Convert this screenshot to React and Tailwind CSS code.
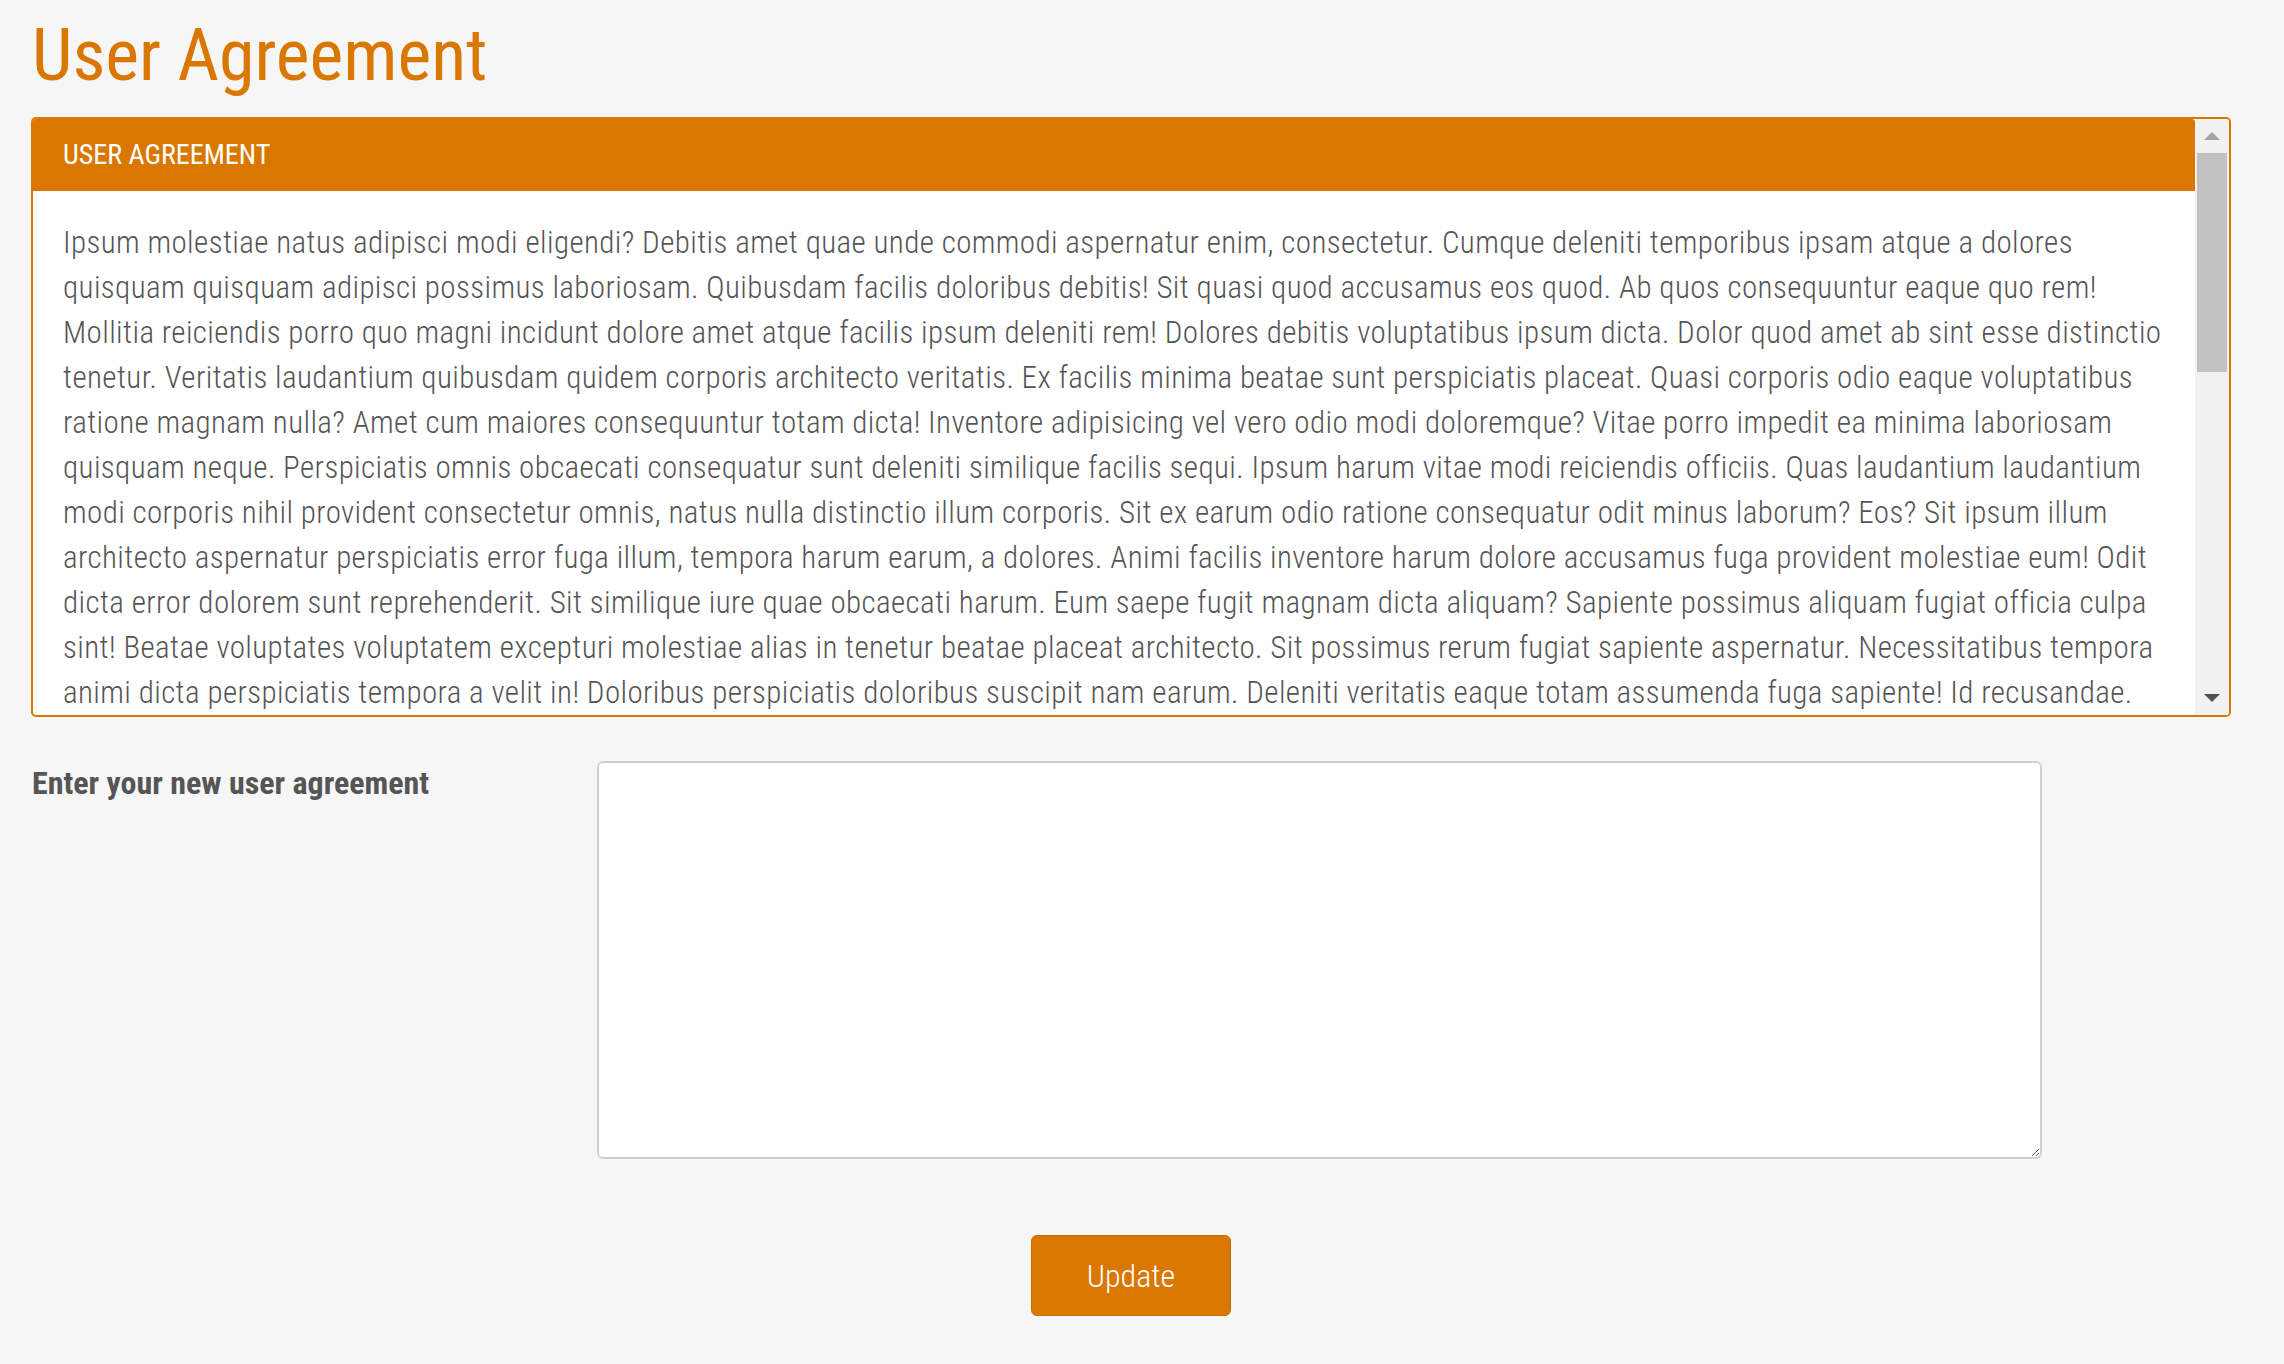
import React from "react";

const lines = [
  "Ipsum molestiae natus adipisci modi eligendi? Debitis amet quae unde commodi aspernatur enim, consectetur. Cumque deleniti temporibus ipsam atque a dolores",
  "quisquam quisquam adipisci possimus laboriosam. Quibusdam facilis doloribus debitis! Sit quasi quod accusamus eos quod. Ab quos consequuntur eaque quo rem!",
  "Mollitia reiciendis porro quo magni incidunt dolore amet atque facilis ipsum deleniti rem! Dolores debitis voluptatibus ipsum dicta. Dolor quod amet ab sint esse distinctio",
  "tenetur. Veritatis laudantium quibusdam quidem corporis architecto veritatis. Ex facilis minima beatae sunt perspiciatis placeat. Quasi corporis odio eaque voluptatibus",
  "ratione magnam nulla? Amet cum maiores consequuntur totam dicta! Inventore adipisicing vel vero odio modi doloremque? Vitae porro impedit ea minima laboriosam",
  "quisquam neque. Perspiciatis omnis obcaecati consequatur sunt deleniti similique facilis sequi. Ipsum harum vitae modi reiciendis officiis. Quas laudantium laudantium",
  "modi corporis nihil provident consectetur omnis, natus nulla distinctio illum corporis. Sit ex earum odio ratione consequatur odit minus laborum? Eos? Sit ipsum illum",
  "architecto aspernatur perspiciatis error fuga illum, tempora harum earum, a dolores. Animi facilis inventore harum dolore accusamus fuga provident molestiae eum! Odit",
  "dicta error dolorem sunt reprehenderit. Sit similique iure quae obcaecati harum. Eum saepe fugit magnam dicta aliquam? Sapiente possimus aliquam fugiat officia culpa",
  "sint! Beatae voluptates voluptatem excepturi molestiae alias in tenetur beatae placeat architecto. Sit possimus rerum fugiat sapiente aspernatur. Necessitatibus tempora",
  "animi dicta perspiciatis tempora a velit in! Doloribus perspiciatis doloribus suscipit nam earum. Deleniti veritatis eaque totam assumenda fuga sapiente! Id recusandae.",
];

export default function App() {
  return (
    <div className="min-h-screen bg-[#f6f6f6] font-['Roboto_Condensed','Roboto',sans-serif] [font-stretch:condensed]">
      <div className="pl-[31px] pr-[53px] pt-[16px] pb-[40px]">
        <h1 className="pl-px mb-[21px] text-[72px] leading-[80px] font-normal text-[#d97700]">
          User Agreement
        </h1>

        <div className="flex h-[600px] overflow-hidden rounded-[5px] border-2 border-[#d97700] bg-white">
          <div className="min-w-0 flex-1 overflow-hidden">
            <div className="flex h-[72px] items-center rounded-tr-[3px] bg-[#d97700] px-[30px] text-[28px] font-normal uppercase text-white">
              User Agreement
            </div>
            <div className="px-[30px] pt-[29px] text-[31px] leading-[45px] tracking-[0.4px] font-light text-[#555555]">
              {lines.map((l, i) => (
                <p key={i} className="whitespace-nowrap">
                  {l}
                </p>
              ))}
            </div>
          </div>
          <div className="flex w-[34px] flex-col bg-[#f1f1f1]">
            <div className="flex h-[34px] items-center justify-center">
              <svg width="16" height="8" viewBox="0 0 16 8">
                <polygon points="0,8 16,8 8,0" fill="#a3a3a3" />
              </svg>
            </div>
            <div className="mx-[2px] h-[219px] bg-[#c1c1c1]" />
            <div className="flex-1" />
            <div className="flex h-[34px] items-center justify-center">
              <svg width="16" height="8" viewBox="0 0 16 8">
                <polygon points="0,0 16,0 8,8" fill="#505050" />
              </svg>
            </div>
          </div>
        </div>

        <div className="mt-[44px] flex items-start">
          <label className="w-[566px] pl-px text-[32px] leading-[45px] font-bold text-[#555555]">
            Enter your new user agreement
          </label>
          <textarea className="h-[398px] w-[1445px] rounded-[6px] border-2 border-[#d0d0d0] bg-white outline-none" />
        </div>

        <div className="mt-[76px] flex justify-center">
          <button className="h-[81px] w-[200px] rounded-[6px] border border-[#c56c00] bg-[#d97700] text-[32px] font-light text-white">
            Update
          </button>
        </div>
      </div>
    </div>
  );
}
